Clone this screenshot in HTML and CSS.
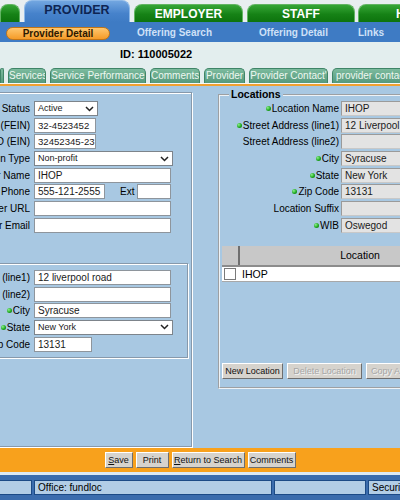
FILE: index.html
```html
<!DOCTYPE html>
<html>
<head>
<meta charset="utf-8">
<title>Provider Detail</title>
<link rel="stylesheet" href="styles.css">
</head>
<body>
<div class="page">
  <div class="toptabs">
    <div class="ttab first"></div>
    <div class="ttab blue">PROVIDER</div>
    <div class="ttab g2">EMPLOYER</div>
    <div class="ttab g3">STAFF</div>
    <div class="ttab g4">HELP</div>
  </div>
  <div class="subnav">
    <span class="pill">Provider Detail</span>
    <span class="sn sn2">Offering Search</span>
    <span class="sn sn3">Offering Detail</span>
    <span class="sn sn4">Links</span>
  </div>
  <div class="idbar">ID: 110005022</div>
  <div class="ptabs">
    <div class="pt t0"></div>
    <div class="pt t1">Services</div>
    <div class="pt t2">Service Performance</div>
    <div class="pt t3">Comments</div>
    <div class="pt t4">Provider</div>
    <div class="pt t5">Provider Contact'</div>
    <div class="pt t6">provider contacts</div>
  </div>
  <div class="oline"></div>
  <div class="main">
    <div class="leftpanel">
      <div class="form">
        <div class="lbl">Provider Status</div>
        <div class="inp sel w64"><span>Active</span><svg class="chev" width="9" height="6" viewBox="0 0 9 6"><polyline points="1,1 4.5,4.5 8,1" fill="none" stroke="#222" stroke-width="1.5"/></svg></div>
        <div class="lbl">Federal ID (FEIN)</div>
        <div class="inp w62">32-4523452</div>
        <div class="lbl">State ID (EIN)</div>
        <div class="inp w62">32452345-23</div>
        <div class="lbl">Organization Type</div>
        <div class="inp sel w139"><span>Non-profit</span><svg class="chev" width="9" height="6" viewBox="0 0 9 6"><polyline points="1,1 4.5,4.5 8,1" fill="none" stroke="#222" stroke-width="1.5"/></svg></div>
        <div class="lbl">Provider Name</div>
        <div class="inp w137">IHOP</div>
        <div class="lbl">Provider Phone</div>
        <div class="phone"><div class="inp w71">555-121-2555</div><span class="ext">Ext</span><div class="inp w34"></div></div>
        <div class="lbl">Provider URL</div>
        <div class="inp w137"></div>
        <div class="lbl">Provider Email</div>
        <div class="inp w137"></div>
      </div>
      <div class="addr">
        <div class="form aform">
          <div class="lbl">Street Address (line1)</div>
          <div class="inp w137">12 liverpool road</div>
          <div class="lbl">Street Address (line2)</div>
          <div class="inp w137"></div>
          <div class="lbl"><span class="dot"></span>City</div>
          <div class="inp w137">Syracuse</div>
          <div class="lbl"><span class="dot"></span>State</div>
          <div class="inp sel w139"><span>New York</span><svg class="chev" width="9" height="6" viewBox="0 0 9 6"><polyline points="1,1 4.5,4.5 8,1" fill="none" stroke="#222" stroke-width="1.5"/></svg></div>
          <div class="lbl">Zip Code</div>
          <div class="inp w58">13131</div>
        </div>
      </div>
    </div>
    <fieldset class="loc">
      <legend>Locations</legend>
      <div class="form rform">
        <div class="lbl"><span class="dot"></span>Location Name</div>
        <div class="inp ro">IHOP</div>
        <div class="lbl"><span class="dot"></span>Street Address (line1)</div>
        <div class="inp ro">12 Liverpool Road</div>
        <div class="lbl">Street Address (line2)</div>
        <div class="inp ro"></div>
        <div class="lbl"><span class="dot"></span>City</div>
        <div class="inp ro">Syracuse</div>
        <div class="lbl"><span class="dot"></span>State</div>
        <div class="inp ro">New York</div>
        <div class="lbl"><span class="dot"></span>Zip Code</div>
        <div class="inp ro">13131</div>
        <div class="lbl">Location Suffix</div>
        <div class="inp ro"></div>
        <div class="lbl"><span class="dot"></span>WIB</div>
        <div class="inp ro">Oswegod</div>
      </div>
      <table class="grid">
        <tr><th class="c0"></th><th class="c1">Location</th></tr>
        <tr><td class="c0"><span class="cb"></span></td><td class="c1">IHOP</td></tr>
      </table>
      <div class="btns">
        <div class="btn b1">New Location</div>
        <div class="btn dis b2">Delete Location</div>
        <div class="btn dis b3">Copy Address</div>
      </div>
    </fieldset>
  </div>
  <div class="actions">
    <div class="btn a1"><u>S</u>ave</div>
    <div class="btn a2">Print</div>
    <div class="btn a3"><u>R</u>eturn to Search</div>
    <div class="btn a4">Comments</div>
  </div>
  <div class="lline"></div>
  <div class="status">
    <div class="cell s1"></div>
    <div class="cell s2">Office: fundloc</div>
    <div class="cell s3"></div>
    <div class="cell s4">Security Role</div>
  </div>
</div>
</body>
</html>
```
FILE: styles.css
```css
* { box-sizing: border-box; }
html, body { margin: 0; padding: 0; }
body {
  width: 400px;
  height: 500px;
  overflow: hidden;
  font-family: "Liberation Sans", Arial, sans-serif;
  font-size: 10px;
  color: #000;
  background: #a8c8e2;
}
.page {
  width: 400px;
  height: 500px;
  overflow: hidden;
  display: flex;
  flex-direction: column;
}

/* top tabs */
.toptabs {
  flex: none;
  height: 22px;
  background: #e8eef0;
  display: flex;
  align-items: flex-end;
  gap: 4px;
}
.ttab {
  flex: none;
  height: 18px;
  border-radius: 8px 8px 0 0;
  background: linear-gradient(#36a636, #168216 55%, #0d730d);
  border: 1px solid #62b462;
  border-bottom: none;
  color: #fff;
  font-weight: bold;
  font-size: 12px;
  display: flex;
  align-items: center;
  justify-content: center;
  white-space: nowrap;
  overflow: hidden;
}
.ttab.first { width: 20px; }
.ttab.blue {
  height: 22px;
  width: 106px;
  background: linear-gradient(#72a6e0, #4682cb 60%, #3e7bc4);
  border-color: #8cb8e8;
  color: #0e2452;
  padding-bottom: 3px;
  font-size: 12.5px;
}
.ttab.g2 { width: 109px; }
.ttab.g3 { width: 108px; }
.ttab.g4 { width: 108px; margin-left: -1px; }

/* sub navigation */
.subnav {
  flex: none;
  height: 20px;
  background: #3e7bc4;
  display: flex;
  align-items: center;
  font-weight: bold;
  font-size: 10px;
  color: #cfe1f7;
  white-space: nowrap;
}
.pill {
  margin-left: 6px;
  margin-top: 2px;
  width: 104px;
  height: 13px;
  border-radius: 7px;
  background: linear-gradient(#ffc76e, #f59b28);
  border: 1px solid #c27516;
  color: #2b1800;
  display: flex;
  align-items: center;
  justify-content: center;
}
.sn2 { margin-left: 27px; }
.sn3 { margin-left: 47px; }
.sn4 { margin-left: 30px; }

/* id */
.idbar {
  flex: none;
  height: 24px;
  background: #e3eeee;
  padding-left: 120px;
  line-height: 24px;
  font-weight: bold;
  font-size: 11px;
}

/* page tabs */
.ptabs {
  flex: none;
  height: 18px;
  background: #e3eeee;
  display: flex;
  align-items: flex-end;
  gap: 4px;
  border-bottom: 1px solid #f6f9f6;
}
.pt {
  flex: none;
  height: 15px;
  border-radius: 5px 5px 0 0;
  background: linear-gradient(#7cbb9e, #55997c);
  border: 1px solid #3f8567;
  border-bottom: none;
  color: #eef8f1;
  font-size: 10px;
  line-height: 14px;
  text-align: center;
  white-space: nowrap;
  overflow: hidden;
}
.t0 { width: 4px; }
.t1 { width: 38px; }
.t2 { width: 96px; }
.t3 { width: 50px; }
.t4 { width: 41px; }
.t5 { width: 79px; }
.t6 { width: 84px; text-align: left; padding-left: 3px; }
.oline { flex: none; height: 2px; background: #f0a030; }

/* main */
.main {
  flex: none;
  height: 362px;
  display: flex;
  align-items: flex-start;
}
.leftpanel {
  flex: none;
  margin-left: -100px;
  margin-top: 6px;
  width: 292px;
  height: 355px;
  border: 1px solid #8799ab;
  box-shadow: inset 1px 1px 0 #fff, 1px 1px 0 #fff;
  padding: 8px 0 0 10px;
}
.form {
  display: grid;
  grid-template-columns: 119px auto;
  grid-auto-rows: 15px;
  column-gap: 4px;
  row-gap: 1.7px;
  justify-items: start;
}
.lbl {
  justify-self: stretch;
  text-align: right;
  white-space: nowrap;
  line-height: 15px;
  font-size: 10px;
  display: flex;
  justify-content: flex-end;
  align-items: center;
}
.dot {
  display: inline-block;
  width: 5px;
  height: 5px;
  border-radius: 50%;
  background: radial-gradient(circle at 35% 35%, #8ef08e, #1faa1f 55%, #0a640a);
  margin-right: 1px;
}
.inp {
  height: 15px;
  border: 1px solid #8e959c;
  background: #fff;
  line-height: 13px;
  padding: 0 2px 0 3px;
  font-size: 10px;
  white-space: nowrap;
  overflow: hidden;
  color: #1a1a1a;
}
.sel {
  display: flex;
  justify-content: space-between;
  align-items: center;
  font-size: 9px;
  padding: 0 3px 0 3px;
  border-color: #7d848b;
}
.chev { flex: none; }
.w64 { width: 64px; }
.w62 { width: 62px; font-size: 9.6px; }
.w139 { width: 139px; }
.w137 { width: 137px; }
.w71 { width: 71px; }
.w34 { width: 34px; }
.w58 { width: 58px; }
.phone { display: flex; align-items: center; height: 15px; }
.ext { width: 17px; margin-left: 15px; font-size: 10px; }

.addr {
  margin-top: 30px;
  margin-right: 3px;
  border: 1px solid #8799ab;
  box-shadow: inset 1px 1px 0 #fff, 1px 1px 0 #fff;
  padding: 6px 0 5px 0;
}
.aform { grid-template-columns: 118px auto; }

/* locations */
.loc {
  flex: none;
  margin: 2px 0 0 26px;
  width: 240px;
  min-width: 0;
  border: 2px groove #eef3f7;
  padding: 0 0 8px 2px;
}
.loc legend {
  font-weight: bold;
  font-size: 10.5px;
  padding: 0 2px;
  margin-left: 7px;
  line-height: 13px;
}
.rform { grid-template-columns: 117px 110px; column-gap: 2px; }
.inp.ro {
  width: 110px;
  background: #e3e3e3;
  border-color: #9a9a9a #c8c8c8 #c8c8c8 #9a9a9a;
}

.grid {
  margin-top: 13px;
  width: 258px;
  border-collapse: collapse;
  table-layout: fixed;
}
.grid th {
  height: 20px;
  background: #c8c8c8;
  font-weight: normal;
  font-size: 10.5px;
  border-bottom: 2px solid #8c8c8c;
  padding: 0;
}
.grid th.c0 { width: 17px; border-right: 2px solid #6f6f6f; }
.grid td {
  height: 16px;
  background: #fff;
  border-bottom: 1px solid #a8a8a8;
  padding: 0;
  font-size: 10.5px;
}
.grid td.c1 { padding-left: 3px; }
.cb {
  display: block;
  width: 12px;
  height: 12px;
  margin-left: 2px;
  border: 1px solid #7a7a7a;
  background: #fff;
}

.btns {
  margin-top: 81px;
  display: flex;
  gap: 4px;
}
.btn {
  flex: none;
  height: 16px;
  background: #d6d3cd;
  border: 1px solid;
  border-color: #fff #6e6e6e #6e6e6e #fff;
  font-size: 9px;
  line-height: 14px;
  text-align: center;
  white-space: nowrap;
  overflow: hidden;
  color: #111;
}
.dis { color: #a6a6a6; text-shadow: 1px 1px 0 #f4f4f4; }
.b1 { width: 61px; }
.b2 { width: 75px; }
.b3 { width: 80px; text-align: left; padding-left: 4px; }

/* bottom */
.actions {
  flex: none;
  height: 24px;
  background: #f8a11c;
  display: flex;
  justify-content: center;
  align-items: center;
  gap: 3px;
}
.a1 { width: 28px; }
.a2 { width: 33px; }
.a3 { width: 73px; }
.a4 { width: 48px; }
.lline { flex: none; height: 3px; background: #dde9f3; }
.status {
  flex: none;
  height: 25px;
  background: #3b6cad;
  display: flex;
  gap: 2px;
  padding-top: 5px;
}
.cell {
  flex: none;
  height: 15px;
  background: #b2cde6;
  border: 1px solid #1c4a86;
  font-size: 10px;
  line-height: 13px;
  padding-left: 3px;
  white-space: nowrap;
  overflow: hidden;
}
.s1 { width: 42px; margin-left: -10px; }
.s2 { width: 238px; }
.s3 { width: 92px; }
.s4 { width: 60px; }
```
